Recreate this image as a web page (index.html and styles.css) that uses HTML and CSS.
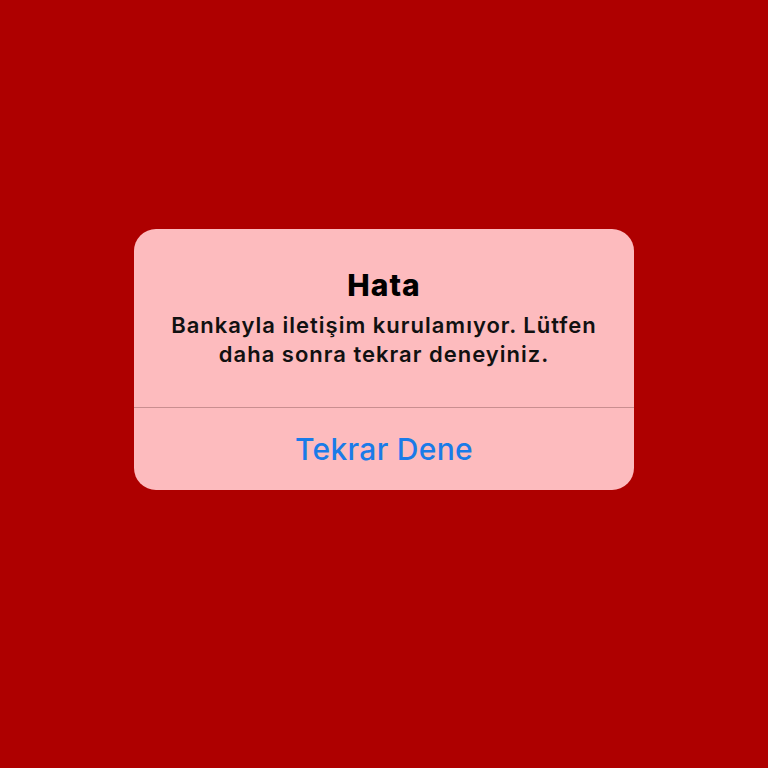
FILE: index.html
```html
<!DOCTYPE html>
<html lang="tr">
<head>
<meta charset="utf-8">
<link rel="stylesheet" href="styles.css">
</head>
<body>
<div class="screen">
  <div class="alert">
    <div class="alert-body">
      <div class="alert-title">Hata</div>
      <div class="alert-message">Bankayla iletişim kurulamıyor. Lütfen<br>daha sonra tekrar deneyiniz.</div>
    </div>
    <div class="alert-action">Tekrar Dene</div>
  </div>
</div>
</body>
</html>
```
FILE: styles.css
```css
html, body {
  margin: 0;
  padding: 0;
}
.screen {
  width: 768px;
  height: 768px;
  background: #ae0000;
  display: flex;
  justify-content: center;
  align-items: flex-start;
  font-family: Inter, "Noto Sans", sans-serif;
}
.alert {
  margin-top: 229px;
  width: 500px;
  background: #fdbbbe;
  border-radius: 22px;
  overflow: hidden;
  display: flex;
  flex-direction: column;
}
.alert-body {
  padding: 38px 10px 38px;
  text-align: center;
  border-bottom: 1px solid #c98e90;
}
.alert-title {
  font-size: 30px;
  font-weight: 800;
  line-height: 36px;
  letter-spacing: 1px;
  color: #000;
}
.alert-message {
  margin-top: 8px;
  font-size: 22px;
  font-weight: 600;
  line-height: 29px;
  letter-spacing: 1px;
  color: #111;
}
.alert-action {
  height: 82px;
  display: flex;
  align-items: center;
  justify-content: center;
  font-size: 30px;
  font-weight: 500;
  letter-spacing: 0.3px;
  color: #1a7be8;
}
```
